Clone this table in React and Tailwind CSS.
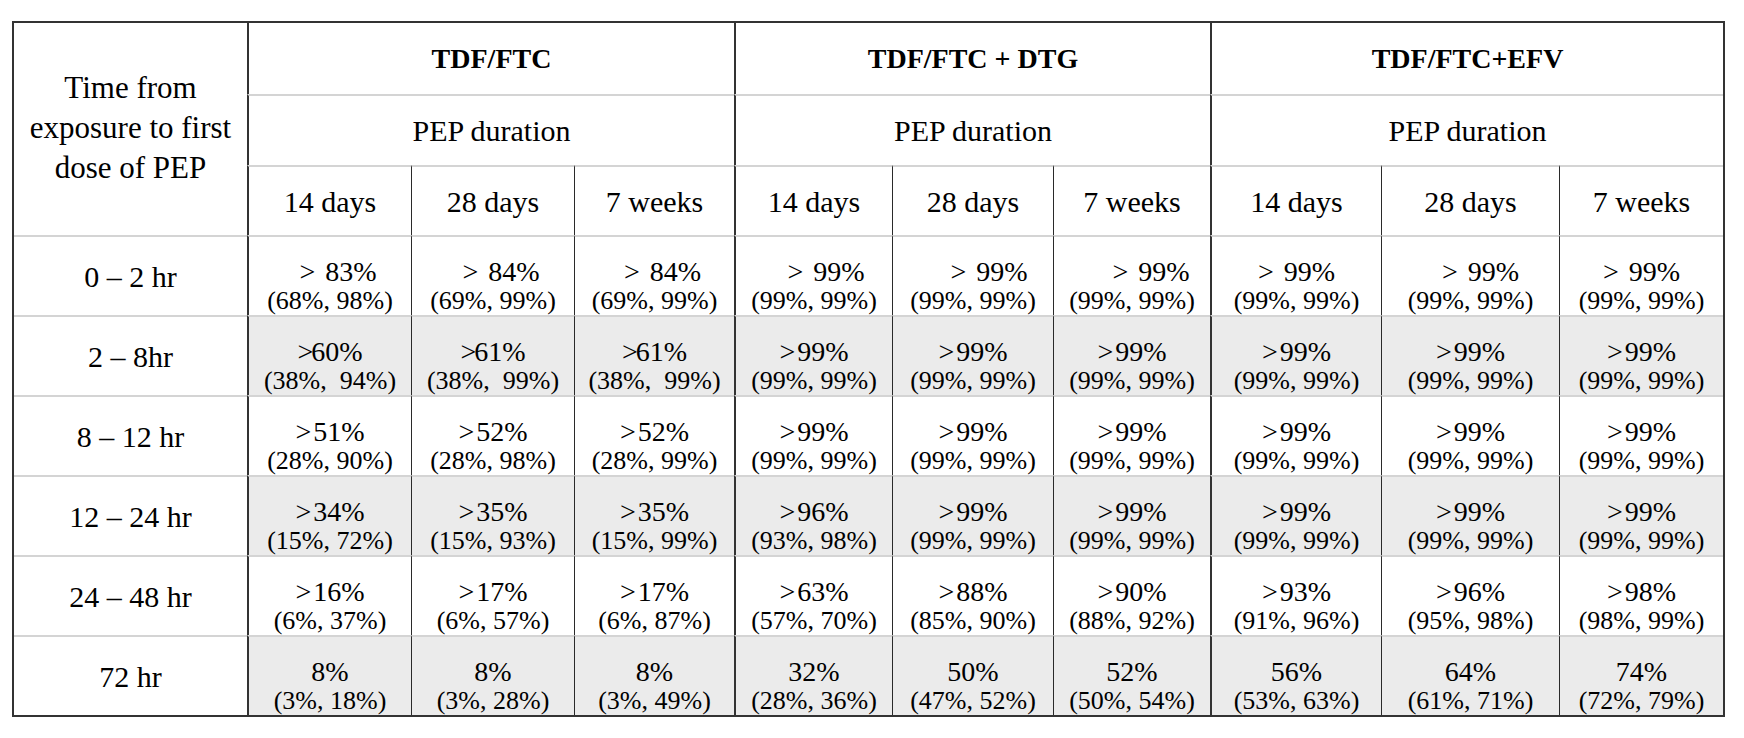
import React from "react";

const groups = ["TDF/FTC", "TDF/FTC + DTG", "TDF/FTC+EFV"];
const durations = ["14 days", "28 days", "7 weeks"];

const all99 = [">99%", "(99%, 99%)"];

const rows = [
  {
    label: "0 – 2 hr",
    gap: "mr-[10px]",
    shifts: ["pl-[16px]", "pl-[16px]", "pl-[16px]", "pl-[24px]", "pl-[32px]", "pl-[38px]", "pl-[0px]", "pl-[20px]", "pl-[0px]"],
    data: [
      [">83%", "(68%, 98%)"],
      [">84%", "(69%, 99%)"],
      [">84%", "(69%, 99%)"],
      all99, all99, all99, all99, all99, all99,
    ],
  },
  {
    label: "2 – 8hr",
    shade: true,
    data: [
      [">60%", "(38%,\u00a0 94%)", "tight"],
      [">61%", "(38%,\u00a0 99%)", "tight"],
      [">61%", "(38%,\u00a0 99%)", "tight"],
      all99, all99, all99, all99, all99, all99,
    ],
  },
  {
    label: "8 – 12 hr",
    data: [
      [">51%", "(28%, 90%)"],
      [">52%", "(28%, 98%)"],
      [">52%", "(28%, 99%)"],
      all99, all99, all99, all99, all99, all99,
    ],
  },
  {
    label: "12 – 24 hr",
    shade: true,
    data: [
      [">34%", "(15%, 72%)"],
      [">35%", "(15%, 93%)"],
      [">35%", "(15%, 99%)"],
      [">96%", "(93%, 98%)"],
      all99, all99, all99, all99, all99,
    ],
  },
  {
    label: "24 – 48 hr",
    data: [
      [">16%", "(6%, 37%)"],
      [">17%", "(6%, 57%)"],
      [">17%", "(6%, 87%)"],
      [">63%", "(57%, 70%)"],
      [">88%", "(85%, 90%)"],
      [">90%", "(88%, 92%)"],
      [">93%", "(91%, 96%)"],
      [">96%", "(95%, 98%)"],
      [">98%", "(98%, 99%)"],
    ],
  },
  {
    label: "72 hr",
    shade: true,
    data: [
      ["8%", "(3%, 18%)"],
      ["8%", "(3%, 28%)"],
      ["8%", "(3%, 49%)"],
      ["32%", "(28%, 36%)"],
      ["50%", "(47%, 52%)"],
      ["52%", "(50%, 54%)"],
      ["56%", "(53%, 63%)"],
      ["64%", "(61%, 71%)"],
      ["74%", "(72%, 79%)"],
    ],
  },
];

function Main({ text, gap, tight }) {
  if (text.startsWith(">")) {
    return (
      <>
        <span className={tight ? "mr-[-2px]" : gap || "mr-[2px]"}>&gt;</span>
        {text.slice(1)}
      </>
    );
  }
  return text;
}

export default function App() {
  return (
    <div className="min-h-[738px] w-[1744px] bg-white pl-[12px] pt-[21px] font-serif text-black">
      <div className="grid w-fit grid-cols-[233px_164px_163px_160px_158px_161px_157px_171px_178px_164px] grid-rows-[71px_71px_70px_80px_80px_80px_80px_80px_80px] border-2 border-[#333] [font-family:Liberation_Serif,serif]">
        {/* corner header */}
        <div className="col-start-1 row-span-3 row-start-1 flex items-center justify-center pb-[2px] text-center text-[31px] leading-[40px]">
          <span>
            Time from
            <br />
            exposure to first
            <br />
            dose of PEP
          </span>
        </div>

        {/* group titles */}
        {groups.map((g) => (
          <div
            key={g}
            className="col-span-3 row-start-1 flex items-center justify-center border-l-2 border-l-[#333] text-[28px] font-bold"
          >
            {g}
          </div>
        ))}

        {/* PEP duration */}
        {groups.map((g) => (
          <div
            key={g + "pep"}
            className="col-span-3 row-start-2 flex items-center justify-center border-l-2 border-t-2 border-l-[#333] border-t-[#d4d4d4] text-[30px]"
          >
            PEP duration
          </div>
        ))}

        {/* durations */}
        {groups.map((g) =>
          durations.map((d, di) => (
            <div
              key={g + d}
              className={
                "row-start-3 flex items-center justify-center border-t-2 border-t-[#d4d4d4] text-[30px] " +
                (di === 0 ? "border-l-2 border-l-[#333]" : "border-l border-l-[#2a2a2a]")
              }
            >
              {d}
            </div>
          ))
        )}

        {/* data rows */}
        {rows.map((r) => (
          <React.Fragment key={r.label}>
            <div className="col-start-1 flex items-center justify-center border-t-2 border-t-[#d4d4d4] text-[30px]">
              {r.label}
            </div>
            {r.data.map((c, ci) => (
              <div
                key={ci}
                className={
                  "flex flex-col items-center border-t-2 border-t-[#d4d4d4] pt-[22px] " +
                  (ci % 3 === 0 ? "border-l-2 border-l-[#333] " : "border-l border-l-[#2a2a2a] ") +
                  (r.shade ? "bg-[#ebebeb]" : "bg-white")
                }
              >
                <div
                  className={
                    "whitespace-pre text-[28px] leading-[26px] " +
                    (r.shifts ? r.shifts[ci] : "")
                  }
                >
                  <Main text={c[0]} gap={r.gap} tight={c[2] === "tight"} />
                </div>
                <div className="whitespace-pre text-[26px] leading-[32px]">{c[1]}</div>
              </div>
            ))}
          </React.Fragment>
        ))}
      </div>
    </div>
  );
}
